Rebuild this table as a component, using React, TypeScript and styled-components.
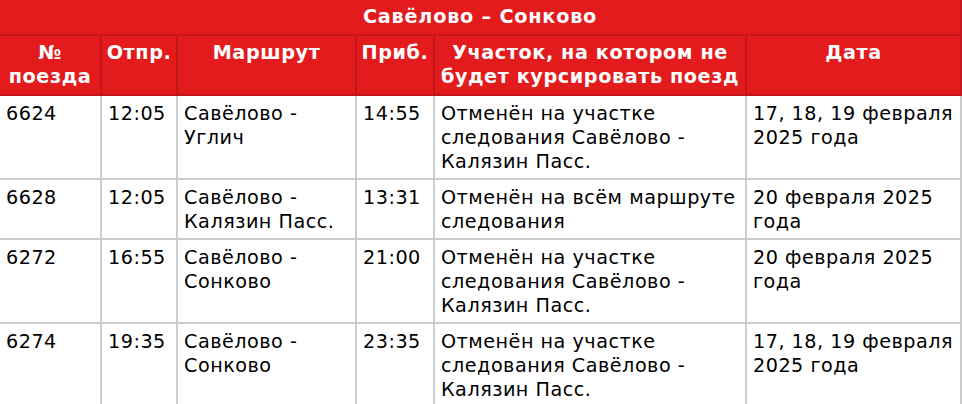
import { FC } from 'react';
import styled, { createGlobalStyle } from 'styled-components';

type Train = {
  number: string;
  departure: string;
  route: string;
  arrival: string;
  section: string;
  date: string;
};

const trains: Train[] = [
  {
    number: '6624',
    departure: '12:05',
    route: 'Савёлово - Углич',
    arrival: '14:55',
    section: 'Отменён на участке следования Савёлово - Калязин Пасс.',
    date: '17, 18, 19 февраля 2025 года',
  },
  {
    number: '6628',
    departure: '12:05',
    route: 'Савёлово - Калязин Пасс.',
    arrival: '13:31',
    section: 'Отменён на всём маршруте следования',
    date: '20 февраля 2025 года',
  },
  {
    number: '6272',
    departure: '16:55',
    route: 'Савёлово - Сонково',
    arrival: '21:00',
    section: 'Отменён на участке следования Савёлово - Калязин Пасс.',
    date: '20 февраля 2025 года',
  },
  {
    number: '6274',
    departure: '19:35',
    route: 'Савёлово - Сонково',
    arrival: '23:35',
    section: 'Отменён на участке следования Савёлово - Калязин Пасс.',
    date: '17, 18, 19 февраля 2025 года',
  },
];

const columns = [
  { title: '№ поезда', width: 102 },
  { title: 'Отпр.', width: 76 },
  { title: 'Маршрут', width: 179 },
  { title: 'Приб.', width: 78 },
  { title: 'Участок, на котором не будет курсировать поезд', width: 312 },
  { title: 'Дата', width: 215 },
];

const GlobalStyle = createGlobalStyle`
  html, body {
    margin: 0;
    padding: 0;
    background: #fff;
    overflow: hidden;
  }
  body {
    font-family: "DejaVu Sans", Verdana, sans-serif;
  }
`;

const ScheduleTable: FC = () => (
  <Table>
    <colgroup>
      {columns.map((col) => (
        <Col key={col.title} width={col.width} />
      ))}
    </colgroup>
    <thead>
      <tr>
        <TitleCell colSpan={columns.length}>Савёлово – Сонково</TitleCell>
      </tr>
      <tr>
        {columns.map((col) => (
          <HeadCell key={col.title}>{col.title}</HeadCell>
        ))}
      </tr>
    </thead>
    <tbody>
      {trains.map((train) => (
        <tr key={train.number}>
          <Cell>{train.number}</Cell>
          <Cell>{train.departure}</Cell>
          <Cell>{train.route}</Cell>
          <Cell>{train.arrival}</Cell>
          <Cell>{train.section}</Cell>
          <Cell>{train.date}</Cell>
        </tr>
      ))}
    </tbody>
  </Table>
);

const App: FC = () => (
  <>
    <GlobalStyle />
    <Page>
      <ScheduleTable />
    </Page>
  </>
);

export default App;

const Page = styled.div`
  width: 962px;
  height: 404px;
  overflow: hidden;
`;

const Table = styled.table`
  width: 964px;
  margin-left: -2px;
  border-collapse: collapse;
  table-layout: fixed;
  font-size: 19.2px;
  line-height: 24px;
`;

const Col = styled.col<{ width: number }>`
  width: ${({ width }) => width}px;
`;

const TitleCell = styled.th`
  padding: 5px 6px;
  background: #e31b1d;
  color: #fff;
  font-weight: bold;
  letter-spacing: 0.8px;
  text-align: center;
  border: 2px solid #c5171b;
  border-top: none;
`;

const HeadCell = styled.th`
  padding: 5px 2px;
  background: #e31b1d;
  color: #fff;
  font-weight: bold;
  letter-spacing: 0.6px;
  text-align: center;
  vertical-align: top;
  border: 2px solid #c5171b;
`;

const Cell = styled.td`
  padding: 6px 6px 4px;
  color: #000;
  letter-spacing: 0.5px;
  text-align: left;
  vertical-align: top;
  border: 2px solid #cccccc;
`;
